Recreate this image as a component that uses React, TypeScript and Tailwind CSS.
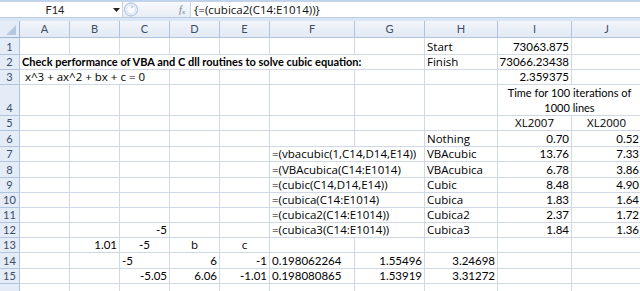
import React from "react";

type Cell = {
  c: number; // column index 1..10 (A..J)
  t: string;
  a?: "l" | "r" | "c";
  b?: boolean;
  span?: number;
  wrap?: boolean;
};

const COLS = ["A", "B", "C", "D", "E", "F", "G", "H", "I", "J"];

// row number -> cells
const DATA: Record<number, Cell[]> = {
  1: [
    { c: 8, t: "Start" },
    { c: 9, t: "73063.875", a: "r" },
  ],
  2: [
    { c: 1, t: "Check performance of VBA and C dll routines to solve cubic equation:", b: true, span: 7 },
    { c: 8, t: "Finish" },
    { c: 9, t: "73066.23438", a: "r" },
  ],
  3: [
    { c: 1, t: " x^3 + ax^2 + bx + c = 0", span: 3 },
    { c: 9, t: "2.359375", a: "r" },
  ],
  4: [{ c: 9, t: "Time for 100 iterations of\n1000 lines", a: "c", span: 2, wrap: true }],
  5: [
    { c: 9, t: "XL2007", a: "c" },
    { c: 10, t: "XL2000", a: "c" },
  ],
  6: [
    { c: 8, t: "Nothing" },
    { c: 9, t: "0.70", a: "r" },
    { c: 10, t: "0.52", a: "r" },
  ],
  7: [
    { c: 6, t: "=(vbacubic(1,C14,D14,E14))", span: 2 },
    { c: 8, t: "VBAcubic" },
    { c: 9, t: "13.76", a: "r" },
    { c: 10, t: "7.33", a: "r" },
  ],
  8: [
    { c: 6, t: "=(VBAcubica(C14:E1014)", span: 2 },
    { c: 8, t: "VBAcubica" },
    { c: 9, t: "6.78", a: "r" },
    { c: 10, t: "3.86", a: "r" },
  ],
  9: [
    { c: 6, t: "=(cubic(C14,D14,E14))", span: 2 },
    { c: 8, t: "Cubic" },
    { c: 9, t: "8.48", a: "r" },
    { c: 10, t: "4.90", a: "r" },
  ],
  10: [
    { c: 6, t: "=(cubica(C14:E1014)", span: 2 },
    { c: 8, t: "Cubica" },
    { c: 9, t: "1.83", a: "r" },
    { c: 10, t: "1.64", a: "r" },
  ],
  11: [
    { c: 6, t: "=(cubica2(C14:E1014))", span: 2 },
    { c: 8, t: "Cubica2" },
    { c: 9, t: "2.37", a: "r" },
    { c: 10, t: "1.72", a: "r" },
  ],
  12: [
    { c: 3, t: "-5", a: "r" },
    { c: 6, t: "=(cubica3(C14:E1014))", span: 2 },
    { c: 8, t: "Cubica3" },
    { c: 9, t: "1.84", a: "r" },
    { c: 10, t: "1.36", a: "r" },
  ],
  13: [
    { c: 2, t: "1.01", a: "r" },
    { c: 3, t: "-5", a: "c" },
    { c: 4, t: "b", a: "c" },
    { c: 5, t: "c", a: "c" },
  ],
  14: [
    { c: 3, t: "-5" },
    { c: 4, t: "6", a: "r" },
    { c: 5, t: "-1", a: "r" },
    { c: 6, t: "0.198062264" },
    { c: 7, t: "1.55496", a: "r" },
    { c: 8, t: "3.24698", a: "r" },
  ],
  15: [
    { c: 3, t: "-5.05", a: "r" },
    { c: 4, t: "6.06", a: "r" },
    { c: 5, t: "-1.01", a: "r" },
    { c: 6, t: "0.198080865" },
    { c: 7, t: "1.53919", a: "r" },
    { c: 8, t: "3.31272", a: "r" },
  ],
};

const isNum = (s: string) => /^-?[\d.]+$/.test(s);

function rowCells(r: number) {
  const list = DATA[r] || [];
  const out: React.ReactNode[] = [];
  let col = 1;
  while (col <= 10) {
    const cell = list.find((x) => x.c === col);
    const span = cell?.span ?? 1;
    const align =
      cell?.a === "r" ? "justify-end text-right" : cell?.a === "c" ? "justify-center text-center" : "justify-start text-left";
    let font = "font-['Open_Sans',sans-serif] text-[11.5px]";
    if (cell && isNum(cell.t)) font = "font-['Lato',sans-serif] text-[11.5px]";
    if (cell?.b) font = "font-['Lato',sans-serif] text-[11px] font-bold";
    if (cell?.wrap) font = "font-['Lato',sans-serif] text-[11px]";
    out.push(
      <div
        key={`${r}-${col}`}
        style={{ gridColumn: `span ${span} / span ${span}` }}
        className={`flex items-end border-r border-b border-[#d0d7e5] px-[2px] overflow-hidden ${align}`}
      >
        {cell && (
          <span
            className={`${cell.wrap ? "whitespace-pre-line leading-[15px]" : "whitespace-pre leading-[14px]"} ${font}`}
          >
            {cell.t}
          </span>
        )}
      </div>
    );
    col += span;
  }
  return out;
}

function FormulaBar() {
  return (
    <div className="h-[21px] bg-[#dbe6f4] border-t-2 border-[#c0d3ea] flex flex-col">
      <div className="h-[16px] flex bg-white border-b border-[#b8cbe2]">
        <div className="w-[110px] flex items-center justify-center text-[11px] text-[#222]">F14</div>
        <div className="w-[12px] flex items-center justify-center">
          <svg width="7" height="4" viewBox="0 0 7 4">
            <path d="M0 0h7L3.5 4z" fill="#222" />
          </svg>
        </div>
        <div className="w-[68px] flex items-center bg-gradient-to-b from-[#f7f9fc] to-[#e8edf5] border-l border-[#c5d2e3]">
          <svg width="17" height="15" viewBox="0 0 17 15">
            <circle cx="8" cy="7.5" r="6.5" fill="#eef2f8" stroke="#a9bcd6" />
            <circle cx="8" cy="7.5" r="4.5" fill="#f8fafd" stroke="#d6e0ed" />
            <circle cx="9" cy="5" r="1" fill="#b8c6d8" />
          </svg>
          <span className="ml-auto mr-[5px] italic text-[10px] leading-[12px] text-[#707a88] font-['Liberation_Serif',serif]">
            f<sub className="text-[7px]">x</sub>
          </span>
        </div>
        <div className="flex-1 flex items-center pl-[3px] border-l border-[#c5d2e3] text-[11.5px] text-[#111] font-['Open_Sans',sans-serif]">
          {"{=(cubica2(C14:E1014))}"}
        </div>
      </div>
    </div>
  );
}

export default function App() {
  const rows = Array.from({ length: 16 }, (_, i) => i + 1);
  return (
    <div className="w-[640px] h-[291px] overflow-hidden bg-white font-['Lato','Liberation_Sans',sans-serif] text-[11px] leading-[14px] text-black">
      <FormulaBar />
      <div className="w-[700px] grid grid-cols-[20px_50px_50px_50px_50px_50px_85px_70px_73px_74px_70px] grid-rows-[17px_17px_15px_15px_31px_15px_16px_15px_16px_15px_15px_15px_15px_15px_16px_15px_15px]">
        {/* corner */}
        <div className="relative bg-[#e4ecf7] border-r border-b border-[#9eb6ce]">
          <svg width="20" height="17" viewBox="0 0 20 17" className="absolute inset-0">
            <path d="M16 4v10H6z" fill="#b7c8de" />
          </svg>
        </div>
        {COLS.map((c) => (
          <div
            key={c}
            className="flex items-center justify-center bg-gradient-to-b from-[#f2f5fa] to-[#e1e9f4] border-r border-b border-[#b1c4dc] text-[#3d4d66]"
          >
            {c}
          </div>
        ))}
        {rows.map((r) => (
          <React.Fragment key={r}>
            <div className="flex items-end justify-center bg-[#e4ecf7] border-r border-b border-[#b1c4dc] text-[#3d4d66]">
              {r < 16 ? r : ""}
            </div>
            {rowCells(r)}
          </React.Fragment>
        ))}
      </div>
    </div>
  );
}
